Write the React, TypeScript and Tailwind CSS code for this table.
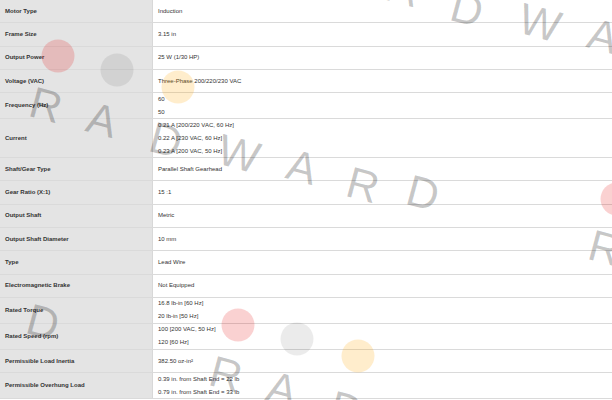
const rows: [string, string[]][] = [
  ["Motor Type", ["Induction"]],
  ["Frame Size", ["3.15 in"]],
  ["Output Power", ["25 W (1/30 HP)"]],
  ["Voltage (VAC)", ["Three-Phase 200/220/230 VAC"]],
  ["Frequency (Hz)", ["60", "50"]],
  ["Current", ["0.21 A [200/220 VAC, 60 Hz]", "0.22 A [230 VAC, 60 Hz]", "0.23 A [200 VAC, 50 Hz]"]],
  ["Shaft/Gear Type", ["Parallel Shaft Gearhead"]],
  ["Gear Ratio (X:1)", ["15 :1"]],
  ["Output Shaft", ["Metric"]],
  ["Output Shaft Diameter", ["10 mm"]],
  ["Type", ["Lead Wire"]],
  ["Electromagnetic Brake", ["Not Equipped"]],
  ["Rated Torque", ["16.8 lb-in [60 Hz]", "20 lb-in [50 Hz]"]],
  ["Rated Speed (rpm)", ["100 [200 VAC, 50 Hz]", "120 [60 Hz]"]],
  ["Permissible Load Inertia", ["382.50 oz-in²"]],
  ["Permissible Overhung Load", ["0.39 in. from Shaft End = 22 lb", "0.79 in. from Shaft End = 33 lb"]],
]

const heights: Record<number, string> = {
  1: "h-[23.3px]",
  2: "h-[26px]",
  3: "h-[39px]",
}

// watermark letters (centre points) for one stamp
const letters: [string, number, number][] = [
  ["R", 46, 105],
  ["A", 102, 120],
  ["D", 166, 140],
  ["W", 239, 154],
  ["A", 302, 167],
  ["R", 363, 185],
  ["D", 423, 193],
]

const dots: [string, number, number][] = [
  ["bg-[rgba(230,0,0,0.18)]", 58, 56],
  ["bg-[rgba(0,0,0,0.08)]", 117, 70],
  ["bg-[rgba(255,165,0,0.2)]", 178, 87],
]

const stamps: [number, number][] = [
  [0, 0],
  [301, -131],
  [559, 143],
  [180, 269],
  [-380, 129],
]

function Stamp({ dx, dy }: { dx: number; dy: number }) {
  return (
    <>
      {dots.map(([cls, x, y], i) => (
        <div
          key={"d" + i}
          className={`absolute w-[33px] h-[33px] rounded-full -translate-x-1/2 -translate-y-1/2 ${cls}`}
          style={{ left: x + dx, top: y + dy }}
        />
      ))}
      {letters.map(([ch, x, y], i) => (
        <span
          key={"l" + i}
          className="absolute -translate-x-1/2 -translate-y-1/2 rotate-[15deg] text-[44px] leading-none text-[rgba(0,0,0,0.22)] font-['Liberation_Sans',Arial,sans-serif]"
          style={{ left: x + dx, top: y + dy }}
        >
          {ch}
        </span>
      ))}
    </>
  )
}

export default function App() {
  return (
    <div className="relative w-[612px] h-[400px] overflow-hidden bg-white font-['Liberation_Sans',Arial,sans-serif] text-[6px] text-[#333]">

      {/* SPEC TABLE */}

      <div className="flex flex-col">
        {rows.map(([label, values]) => (
          <div
            key={label}
            className={`flex shrink-0 border-b border-[#dadada] ${heights[values.length]}`}
          >
            <div className="w-[153px] shrink-0 bg-[#e4e4e4] border-r border-[#d8d8d8] flex items-center pl-[5px] font-bold">
              {label}
            </div>
            <div className="flex-1 flex flex-col justify-center pl-[5px]">
              {values.map((v) => (
                <p key={v} className="leading-[13px]">
                  {v}
                </p>
              ))}
            </div>
          </div>
        ))}
      </div>

      {/* WATERMARK */}

      <div className="absolute inset-0 pointer-events-none">
        {stamps.map(([dx, dy], i) => (
          <Stamp key={i} dx={dx} dy={dy} />
        ))}
      </div>

    </div>
  )
}
